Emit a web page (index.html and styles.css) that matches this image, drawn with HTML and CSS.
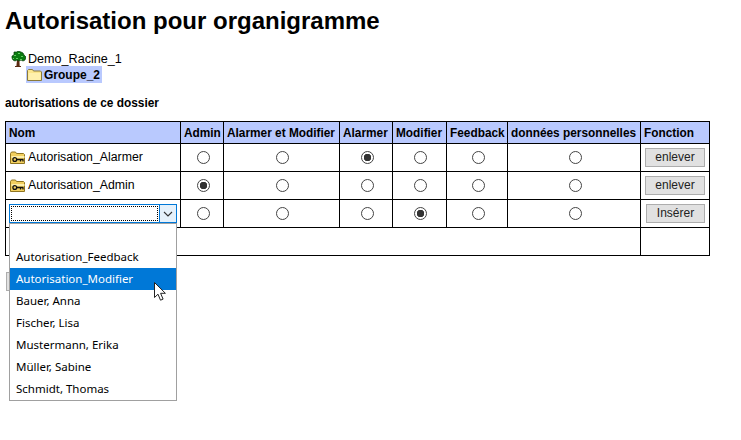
FILE: index.html
```html
<!DOCTYPE html>
<html lang="fr">
<head>
  <meta charset="UTF-8">
  <title>Autorisation pour organigramme</title>
  <link rel="stylesheet" href="styles.css">
</head>
<body>
  <h1>Autorisation pour organigramme</h1>

  <div class="tree">
    <div class="tree-row root">
      <svg class="icon" width="16" height="16" viewBox="0 0 16 16">
        <path d="M7 9h2.4l.3 6H11v1H5v-1h1.4z" fill="#5a2a10"/>
        <path d="M4 1h3l1-1 3 1 2 1 1 2 2 2-1 3-2 1-2-1-2 1-2-1-2 1-2-1-1-2 0-2 2-1z" fill="#0a7a10" stroke="#063c08" stroke-width=".7"/>
        <path d="M4 4h2v1H4zM8 2h2v1H8zM11 5h2v1h-2zM6 7h2v1H6zM3 7h1v1H3zM10 8h2v1h-2z" fill="#5fd05f"/>
      </svg>
      <span>Demo_Racine_1</span>
    </div>
    <div class="tree-row child">
      <svg class="icon" width="15" height="14" viewBox="0 0 15 14">
        <path d="M.5 12.5v-10l1-1h4l1 1.5h7l1 1v8.500z" fill="#fbe58c" stroke="#8a7a3a"/>
        <path d="M1.500 5h12v7h-12z" fill="#fff0ad"/>
      </svg>
      <span>Groupe_2</span>
    </div>
  </div>

  <p class="section-title">autorisations de ce dossier</p>

  <table class="perm-table">
    <thead>
      <tr>
        <th class="col-name">Nom</th>
        <th class="col-admin">Admin</th>
        <th class="col-both">Alarmer et Modifier</th>
        <th class="col-alarm">Alarmer</th>
        <th class="col-mod">Modifier</th>
        <th class="col-feed">Feedback</th>
        <th class="col-data">données personnelles</th>
        <th class="col-action">Fonction</th>
      </tr>
    </thead>
    <tbody>
      <tr>
        <td>
          <div class="name-cell">
            <svg class="icon" width="16" height="13" viewBox="0 0 16 13"><use href="#key-folder"/></svg>
            <span>Autorisation_Alarmer</span>
          </div>
        </td>
        <td class="center"><span class="radio"></span></td>
        <td class="center"><span class="radio"></span></td>
        <td class="center"><span class="radio checked"></span></td>
        <td class="center"><span class="radio"></span></td>
        <td class="center"><span class="radio"></span></td>
        <td class="center"><span class="radio"></span></td>
        <td class="center"><button class="btn">enlever</button></td>
      </tr>
      <tr>
        <td>
          <div class="name-cell">
            <svg class="icon" width="16" height="13" viewBox="0 0 16 13"><use href="#key-folder"/></svg>
            <span>Autorisation_Admin</span>
          </div>
        </td>
        <td class="center"><span class="radio checked"></span></td>
        <td class="center"><span class="radio"></span></td>
        <td class="center"><span class="radio"></span></td>
        <td class="center"><span class="radio"></span></td>
        <td class="center"><span class="radio"></span></td>
        <td class="center"><span class="radio"></span></td>
        <td class="center"><button class="btn">enlever</button></td>
      </tr>
      <tr>
        <td class="select-cell">
          <div class="combo">
            <div class="combo-field"><div class="combo-focus"></div></div>
            <div class="combo-arrow">
              <svg width="10" height="6" viewBox="0 0 10 6"><path d="M1 1l4 4 4-4" fill="none" stroke="#333" stroke-width="1.100"/></svg>
            </div>
            <ul class="combo-list">
              <li></li>
              <li>Autorisation_Feedback</li>
              <li class="active">Autorisation_Modifier</li>
              <li>Bauer, Anna</li>
              <li>Fischer, Lisa</li>
              <li>Mustermann, Erika</li>
              <li>Müller, Sabine</li>
              <li>Schmidt, Thomas</li>
            </ul>
            <svg class="cursor" width="13" height="20" viewBox="0 0 13 20">
              <path d="M.5.5v15l3.500-3.300 2.500 6 2.600-1.100-2.500-5.800h4.800z" fill="#fff" stroke="#222"/>
            </svg>
          </div>
        </td>
        <td class="center"><span class="radio"></span></td>
        <td class="center"><span class="radio"></span></td>
        <td class="center"><span class="radio"></span></td>
        <td class="center"><span class="radio checked"></span></td>
        <td class="center"><span class="radio"></span></td>
        <td class="center"><span class="radio"></span></td>
        <td class="center"><button class="btn btn-insert">Insérer</button></td>
      </tr>
      <tr class="empty-row">
        <td colspan="7"></td>
        <td></td>
      </tr>
    </tbody>
  </table>

  <button class="btn back-btn">&nbsp;</button>

  <svg width="0" height="0" class="defs">
    <defs>
      <g id="key-folder">
        <path d="M.5 12.500v-10l1-1.500h4l1 1.500h7l1 1v9z" fill="#f2cf5f" stroke="#8f7420"/>
        <path d="M1.500 5h13v2H1.500z" fill="#fdeeaa"/>
        <circle cx="4.800" cy="8.500" r="1.900" fill="none" stroke="#111" stroke-width="1.300"/>
        <path d="M6.500 8.500h7M10.500 8.500v2M13 8.500v2" fill="none" stroke="#111" stroke-width="1.300"/>
      </g>
    </defs>
  </svg>
</body>
</html>
```

FILE: styles.css
```css
html {
  height: 100%;
}

body {
  font-family: "Liberation Sans", Arial, sans-serif;
  font-size: 12px;
  box-sizing: border-box;
  min-height: 440px;
  margin: 0;
  padding: 0 5px;
  background-color: #fff;
  color: #000;
}

h1 {
  font-size: 24px;
  font-weight: bold;
  line-height: 25px;
  margin: 0;
  padding-top: 8px;
}

.tree {
  margin-top: 18px;
  padding-left: 5px;
}

.tree-row {
  display: flex;
  align-items: center;
  height: 15px;
}

.root {
  font-size: 12.600px;
}

.tree-row .icon {
  margin-right: 2px;
}

.child {
  margin-left: 16px;
  padding: 0 1px;
  width: 74px;
  background-color: #b9c9fe;
  font-weight: bold;
  height: 17px;
}

.section-title {
  font-size: 11.900px;
  font-weight: bold;
  line-height: 14px;
  margin: 13px 0 11px;
}

.perm-table {
  border-collapse: collapse;
  table-layout: fixed;
  width: 705px;
}

.perm-table th,
.perm-table td {
  box-sizing: border-box;
  border: 1px solid #000;
  padding: 0 3px;
}

.perm-table th {
  font-size: 11.850px;
  background-color: #b9c9fe;
  height: 22px;
  text-align: left;
  white-space: nowrap;
}

.perm-table td {
  height: 28px;
  padding-bottom: 1px;
}

.col-name { width: 175px; }
.col-admin { width: 43px; }
.col-both { width: 116px; }
.col-alarm { width: 53px; }
.col-mod { width: 54px; }
.col-feed { width: 61px; }
.col-data { width: 133px; }

.center {
  text-align: center;
}

.name-cell {
  display: flex;
  align-items: center;
  gap: 2px;
  padding-left: 1px;
  font-size: 12.300px;
}

.radio {
  display: inline-block;
  box-sizing: border-box;
  width: 13px;
  height: 13px;
  margin-left: 2px;
  border: 1px solid #444;
  border-radius: 50%;
  background-color: #fff;
  vertical-align: middle;
}

.radio.checked {
  background: radial-gradient(circle, #333 0, #333 3.500px, #fff 4px);
}

.btn {
  box-sizing: border-box;
  height: 19px;
  width: 60px;
  padding: 0;
  font-family: "Liberation Sans", Arial, sans-serif;
  font-size: 12px;
  color: #222;
  background-color: #e1e1e1;
  border: 1px solid #adadad;
  vertical-align: middle;
}

.btn-insert {
  width: 59px;
  margin-left: 1px;
}

.select-cell {
  padding: 0 !important;
}

.combo {
  position: relative;
  display: flex;
  box-sizing: border-box;
  width: 168px;
  height: 19px;
  margin-left: 3px;
  border: 1px solid #0078d7;
}

.combo-field {
  flex: 1;
  padding: 1px;
}

.combo-focus {
  height: 100%;
  box-sizing: border-box;
  border: 1px dotted #000;
}

.combo-arrow {
  display: flex;
  align-items: center;
  justify-content: center;
  width: 16px;
  border-left: 1px solid #0078d7;
  background-color: #e5f1fb;
}

.combo-list {
  position: absolute;
  left: -1px;
  top: 18px;
  z-index: 2;
  box-sizing: border-box;
  width: 168px;
  margin: 0;
  padding: 0;
  list-style: none;
  background-color: #fff;
  border: 1px solid #a0a0a0;
  font-family: "Noto Sans", sans-serif;
  font-size: 11.500px;
}

.combo-list li {
  height: 22px;
  line-height: 22px;
  padding-left: 6px;
}

.combo-list .active {
  background-color: #0078d7;
  color: #fff;
}

.cursor {
  position: absolute;
  left: 144px;
  top: 77px;
  z-index: 3;
}

.back-btn {
  display: block;
  margin: 16px 0 0 1px;
  height: 19px;
}

.defs {
  position: absolute;
}
```
